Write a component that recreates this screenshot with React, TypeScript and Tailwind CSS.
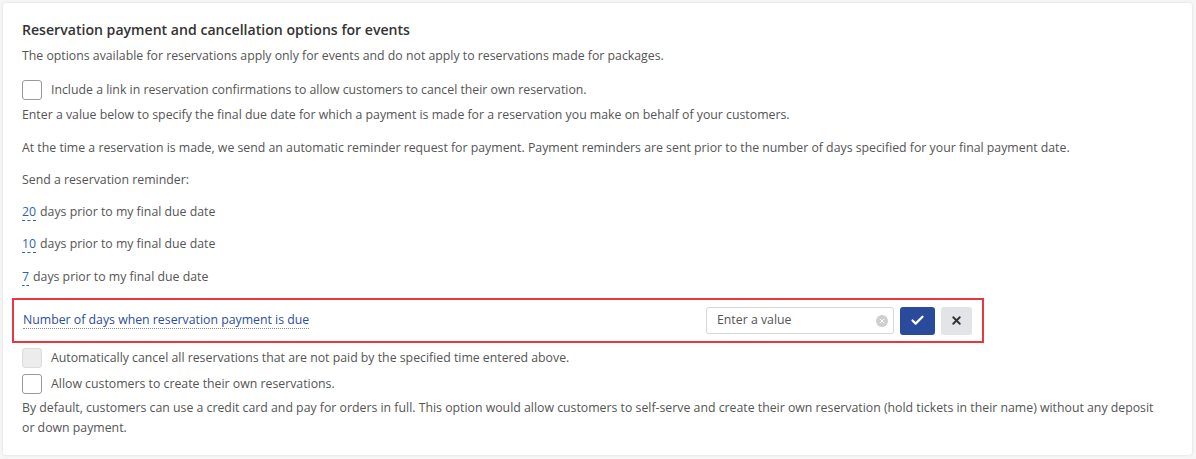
import { Check, X } from 'lucide-react';

function Checkbox({ disabled }: { disabled?: boolean }) {
  return (
    <span
      className={`w-5 h-5 rounded-[3px] border shrink-0 ${
        disabled ? 'bg-[#ececec] border-[#dcdcdc]' : 'bg-white border-[#9a9a9a]'
      }`}
    />
  );
}

function Reminder({ days, top }: { days: string; top: string }) {
  return (
    <p className={`h-[18px] leading-[18px] ${top}`}>
      <span className="text-[#2d63b5] border-b border-dashed border-[#2d63b5] mr-1">{days}</span>
      days prior to my final due date
    </p>
  );
}

export default function App() {
  return (
    <div className="w-[1196px] h-[459px] bg-[#f6f6f6] p-[3px] font-['Open_Sans',sans-serif] text-[12.3px] text-[#555]">
      <div className="h-[452px] w-[1189px] bg-white rounded-[3px] shadow-[0_0_3px_rgba(0,0,0,0.12)] pl-[19px] pr-[30px] pt-[16px]">
        <h2 className="text-[14.1px] font-semibold text-[#333] h-[22px] leading-[22px]">
          Reservation payment and cancellation options for events
        </h2>
        <p className="h-[18px] leading-[18px] mt-[6px]">
          The options available for reservations apply only for events and do not apply to reservations made for packages.
        </p>
        <label className="flex items-center gap-[9px] h-[20px] mt-[15px]">
          <Checkbox />
          <span>Include a link in reservation confirmations to allow customers to cancel their own reservation.</span>
        </label>
        <p className="h-[18px] leading-[18px] mt-[6px]">
          Enter a value below to specify the final due date for which a payment is made for a reservation you make on behalf of your customers.
        </p>
        <p className="h-[18px] leading-[18px] mt-[15px]">
          At the time a reservation is made, we send an automatic reminder request for payment. Payment reminders are sent prior to the number of days specified for your final payment date.
        </p>
        <p className="h-[18px] leading-[18px] mt-[14px]">Send a reservation reminder:</p>
        <Reminder days="20" top="mt-[14px]" />
        <Reminder days="10" top="mt-[14px]" />
        <Reminder days="7" top="mt-[15px]" />

        <div className="mt-[12px] ml-[-10px] w-[972px] h-[45px] border-2 border-[#e8383d] flex items-center justify-between pl-[9px] pr-[10px]">
          <span className="text-[#2d4e9c] border-b border-dotted border-[#8a8a8a] leading-[16px]">
            Number of days when reservation payment is due
          </span>
          <div className="flex items-center gap-[6px]">
            <div className="w-[188px] h-[27px] border border-[#d6d6d6] rounded-[3px] flex items-center justify-between pl-[10px] pr-[5px]">
              <span className="text-[#555]">Enter a value</span>
              <span className="w-[12px] h-[12px] rounded-full bg-[#cfcfcf] flex items-center justify-center">
                <X size={8} strokeWidth={3} className="text-white" />
              </span>
            </div>
            <button className="w-[35px] h-[28px] bg-[#2a4a9b] rounded-[3px] flex items-center justify-center">
              <Check size={15} strokeWidth={3.5} className="text-white" />
            </button>
            <button className="w-[31px] h-[28px] bg-[#e2e4e8] rounded-[3px] flex items-center justify-center">
              <X size={13} strokeWidth={3.5} className="text-[#333]" />
            </button>
          </div>
        </div>

        <label className="flex items-center gap-[9px] h-[20px] mt-[5px]">
          <Checkbox disabled />
          <span>Automatically cancel all reservations that are not paid by the specified time entered above.</span>
        </label>
        <label className="flex items-center gap-[9px] h-[20px] mt-[6px]">
          <Checkbox />
          <span>Allow customers to create their own reservations.</span>
        </label>
        <p className="mt-[4px] leading-[20px]">
          By default, customers can use a credit card and pay for orders in full. This option would allow customers to self-serve and create their own reservation (hold tickets in their name) without any deposit or down payment.
        </p>
      </div>
    </div>
  );
}
